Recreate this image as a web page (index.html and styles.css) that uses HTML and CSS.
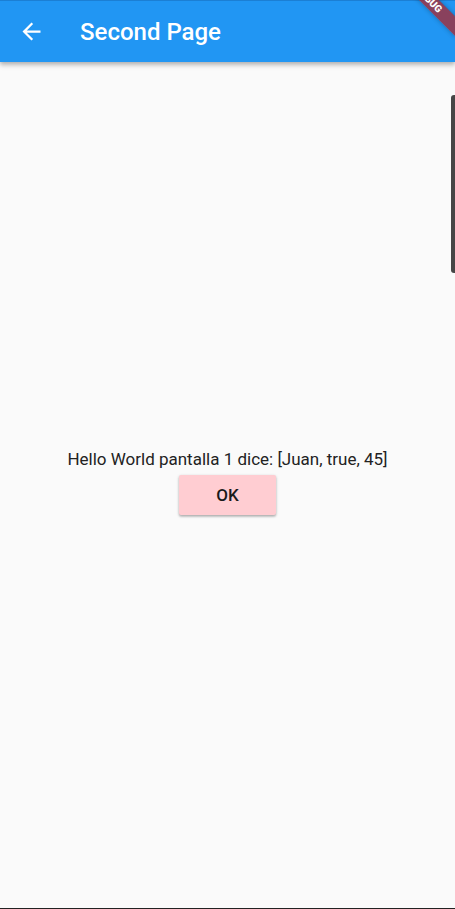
FILE: index.html
```html
<!DOCTYPE html>
<html>
<head>
<meta charset="utf-8">
<link rel="stylesheet" href="styles.css">
</head>
<body>
<div class="screen">
  <header class="appbar">
    <button class="back" aria-label="Back">
      <svg viewBox="0 0 24 24" width="27" height="27"><path fill="#fff" d="M20 11H7.83l5.59-5.59L12 4l-8 8 8 8 1.41-1.41L7.83 13H20v-2z"/></svg>
    </button>
    <h1 class="title">Second Page</h1>
  </header>
  <main class="content">
    <p class="message">Hello World pantalla 1 dice: [Juan, true, 45]</p>
    <button class="ok">OK</button>
  </main>
  <div class="bottom-line"></div>
  <div class="scrollbar"></div>
  <div class="banner"><span>DEBUG</span></div>
</div>
</body>
</html>
```
FILE: styles.css
```css
* { box-sizing: border-box; }
html, body { margin: 0; padding: 0; }
body {
  width: 455px;
  height: 909px;
  overflow: hidden;
  background: #fafafa;
  font-family: Roboto, "Noto Sans", sans-serif;
}
.screen {
  position: relative;
  width: 455px;
  height: 909px;
  display: flex;
  flex-direction: column;
  overflow: hidden;
}
.appbar {
  height: 62px;
  flex: none;
  background: #2196f3;
  border-top: 1px solid #1b7fd4;
  display: flex;
  align-items: center;
  padding-left: 18px;
  box-shadow: 0 2px 4px rgba(0,0,0,0.2), 0 4px 5px rgba(0,0,0,0.12);
  position: relative;
  z-index: 2;
}
.back {
  background: none;
  border: 0;
  padding: 0;
  width: 27px;
  height: 27px;
  display: flex;
}
.title {
  margin: 0 0 0 35px;
  color: #fff;
  font-size: 24px;
  font-weight: 500;
  letter-spacing: 0;
}
.content {
  flex: 1;
  display: flex;
  flex-direction: column;
  align-items: center;
  justify-content: center;
  padding-top: 2px;
}
.message {
  margin: 0;
  font-size: 17px;
  line-height: 18px;
  color: #222;
}
.ok {
  margin: 7px 0 7px;
  width: 97px;
  height: 40px;
  border: 0;
  border-radius: 2px;
  background: #ffcdd2;
  color: #1a1a1a;
  font-family: Roboto, "Noto Sans", sans-serif;
  font-size: 17px;
  font-weight: 500;
  padding: 0;
  box-shadow: 0 1px 3px rgba(0,0,0,0.25), 0 2px 2px rgba(0,0,0,0.12);
}
.bottom-line {
  height: 1px;
  flex: none;
  background: #222;
}
.scrollbar {
  position: absolute;
  right: 0;
  top: 95px;
  width: 4.5px;
  height: 178px;
  background: #464646;
  border-radius: 3px 0 0 3px;
}
.banner {
  position: absolute;
  width: 90px;
  height: 13.5px;
  left: 383.5px;
  top: -6.75px;
  transform: rotate(45deg);
  background: rgba(183, 28, 28, 0.7);
  box-shadow: 0 0 5px rgba(0,0,0,0.3);
  display: flex;
  align-items: center;
  justify-content: center;
  z-index: 3;
}
.banner span {
  color: #fff;
  font-family: Roboto, "Noto Sans", sans-serif;
  font-weight: 900;
  font-size: 10px;
  line-height: 1;
}
```
